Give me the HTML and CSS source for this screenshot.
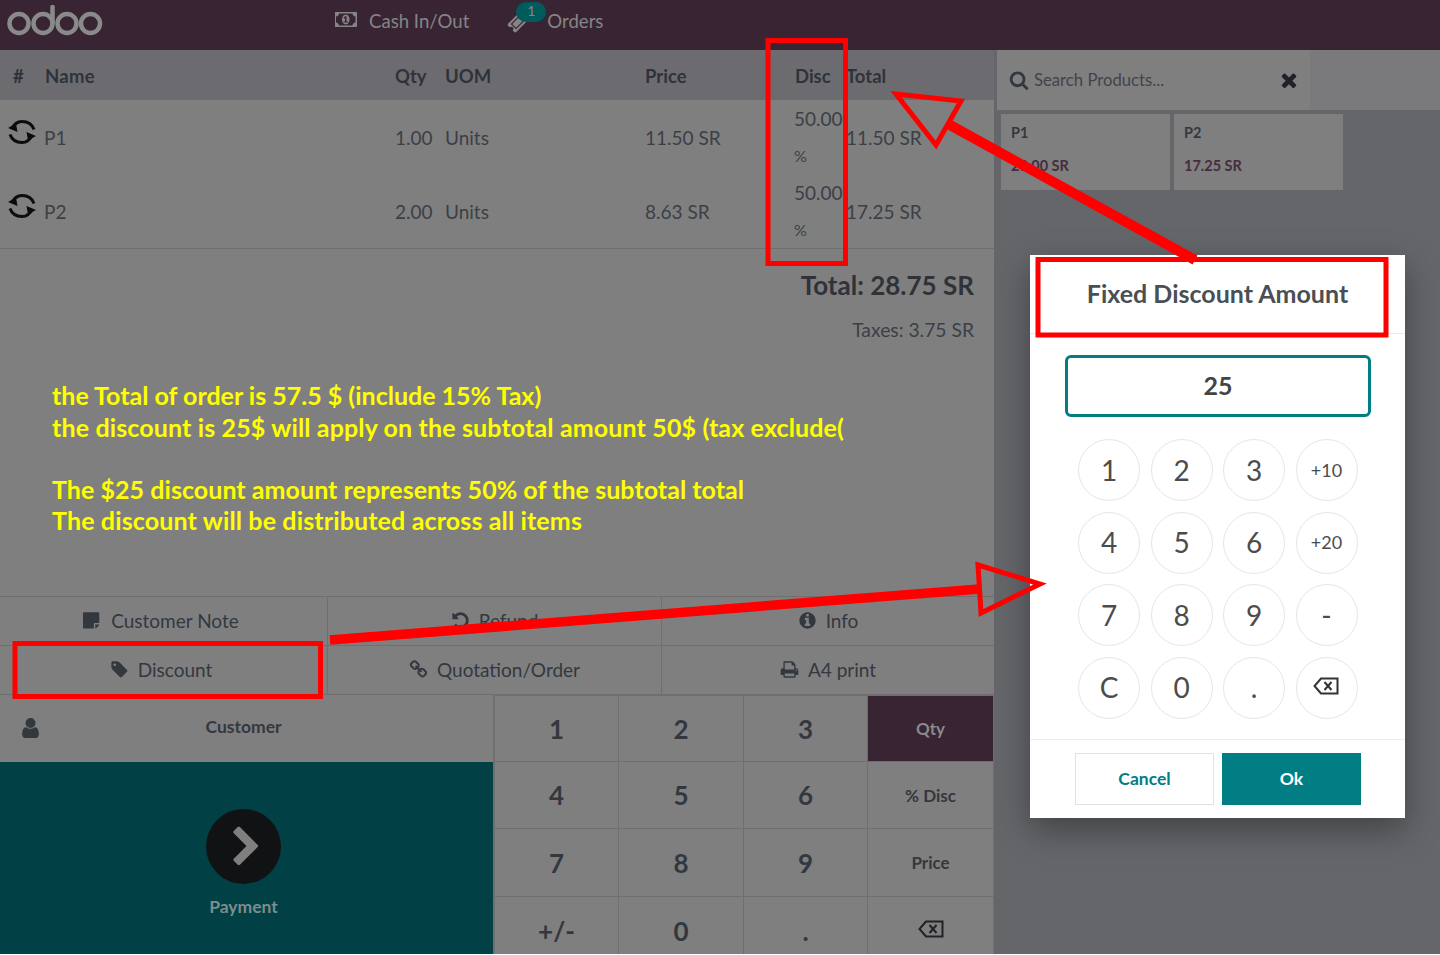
FILE: index.html
```html
<!DOCTYPE html>
<html lang="en">
<head>
    <meta charset="UTF-8">
    <meta name="viewport" content="width=device-width, initial-scale=1.0">
    <title>Point of Sale</title>
    <link rel="stylesheet" href="styles.css">
</head>
<body>
    <svg class="icon-defs" width="0" height="0">
        <symbol id="i-money" viewBox="0 0 1920 1792"><path d="M704 1152h384v-96h-128v-448h-114l-148 137 77 80q42-37 55-57h2v288h-128v96zm512-256q0 70-21 142t-59.500 134-101.500 101-138 39-138-39-101.500-101-59.500-134-21-142 21-142 59.500-134 101.500-101 138-39 138 39 101.500 101 59.500 134 21 142zm512 256v-512q-106 0-181-75t-75-181h-1152q0 106-75 181t-181 75v512q106 0 181 75t75 181h1152q0-106 75-181t181-75zm128-832v1152q0 26-19 45t-45 19h-1792q-26 0-45-19t-19-45v-1152q0-26 19-45t45-19h1792q26 0 45 19t19 45z"/></symbol>
        <symbol id="i-ticket" viewBox="0 0 1792 1792"><path d="M1024 452l316 316-572 572-316-316zm-211 979l618-618q19-19 19-45t-19-45l-362-362q-18-18-45-18t-45 18l-618 618q-19 19-19 45t19 45l362 362q18 18 45 18t45-18zm889-637l-907 908q-37 37-90.500 37t-90.500-37l-126-126q56-56 56-136t-56-136-136-56-136 56l-125-126q-37-37-37-90.500t37-90.500l907-906q37-37 90.500-37t90.500 37l125 125q-56 56-56 136t56 136 136 56 136-56l126 125q37 37 37 90.500t-37 90.500z"/></symbol>
        <symbol id="i-refresh" viewBox="0 0 28 24">
            <path d="M4 9C6 4 9.500 1.500 14 1.500C20 1.500 24 4 26 9.500M24 15C22 20 18.500 22.500 14 22.500C8 22.500 4 20 2 14.500" fill="none" stroke="currentColor" stroke-width="3"/>
            <path d="M0 8L8 3.500L9.500 12ZM28 16L20 20.500L18.500 12Z"/>
        </symbol>
        <symbol id="i-search" viewBox="0 0 1792 1792"><path d="M1216 832q0-185-131.500-316.500t-316.500-131.500-316.500 131.500-131.500 316.500 131.500 316.500 316.500 131.500 316.500-131.500 131.500-316.500zm512 832q0 52-38 90t-90 38q-54 0-90-38l-343-342q-179 124-399 124-143 0-273.500-55.500t-225-150-150-225-55.500-273.500 55.500-273.500 150-225 225-150 273.500-55.500 273.500 55.500 225 150 150 225 55.500 273.500q0 220-124 399l343 343q37 37 37 90z"/></symbol>
        <symbol id="i-times" viewBox="0 0 1792 1792"><path d="M1490 1322q0 40-28 68l-136 136q-28 28-68 28t-68-28l-294-294-294 294q-28 28-68 28t-68-28l-136-136q-28-28-28-68t28-68l294-294-294-294q-28-28-28-68t28-68l136-136q28-28 68-28t68 28l294 294 294-294q28-28 68-28t68 28l136 136q28 28 28 68t-28 68l-294 294 294 294q28 28 28 68z"/></symbol>
        <symbol id="i-note" viewBox="0 0 1792 1792"><path d="M1024 1232v416h-928q-40 0-68-28t-28-68v-1344q0-40 28-68t68-28h1344q40 0 68 28t28 68v928h-416q-40 0-68 28t-28 68zm128 32h381q-15 82-65 132l-184 184q-50 50-132 65v-381z"/></symbol>
        <symbol id="i-undo" viewBox="0 0 1792 1792"><path d="M1664 896q0 156-61 298t-164 245-245 164-298 61q-172 0-327-72.500t-264-204.500q-7-10-6.500-22.500t8.500-20.500l137-138q10-9 25-9 16 2 23 12 73 95 179 147t225 52q104 0 198.500-40.500t163.500-109.500 109.500-163.500 40.500-198.500-40.500-198.500-109.500-163.500-163.500-109.500-198.500-40.500q-98 0-188 35.500t-160 101.500l137 138q31 30 14 69-17 40-59 40h-448q-26 0-45-19t-19-45v-448q0-42 40-59 39-17 69 14l130 129q107-101 244.500-156.500t284.500-55.500q156 0 298 61t245 164 164 245 61 298z"/></symbol>
        <symbol id="i-info" viewBox="0 0 1792 1792"><path d="M1152 1376v-160q0-14-9-23t-23-9h-96v-512q0-14-9-23t-23-9h-320q-14 0-23 9t-9 23v160q0 14 9 23t23 9h96v320h-96q-14 0-23 9t-9 23v160q0 14 9 23t23 9h448q14 0 23-9t9-23zm-128-896v-160q0-14-9-23t-23-9h-192q-14 0-23 9t-9 23v160q0 14 9 23t23 9h192q14 0 23-9t9-23zm640 416q0 209-103 385.500t-279.500 279.500-385.500 103-385.500-103-279.500-279.500-103-385.500 103-385.500 279.500-279.500 385.500-103 385.500 103 279.500 279.500 103 385.500z"/></symbol>
        <symbol id="i-tag" viewBox="0 0 1792 1792"><path d="M576 448q0-53-37.500-90.500t-90.500-37.500-90.500 37.500-37.500 90.500 37.500 90.500 90.500 37.500 90.500-37.500 37.500-90.500zm1067 576q0 53-37 90l-491 492q-39 37-91 37-53 0-90-37l-715-716q-38-37-64.500-101t-26.500-117v-416q0-52 38-90t90-38h416q53 0 117 26.500t102 64.500l715 714q37 39 37 91z"/></symbol>
        <symbol id="i-link" viewBox="0 0 1792 1792"><path d="M1520 1216q0-40-28-68l-208-208q-28-28-68-28-42 0-72 32 3 3 19 18.500t21.500 21.500 15 19 13 25.500 3.500 27.500q0 40-28 68t-68 28q-15 0-27.500-3.500t-25.500-13-19-15-21.500-21.500-18.500-19q-33 31-33 73 0 40 28 68l206 207q27 27 68 27 40 0 68-26l147-146q28-28 28-67zm-703-705q0-40-28-68l-206-207q-28-28-68-28-39 0-68 27l-147 146q-28 28-28 67 0 40 28 68l208 208q27 27 68 27 42 0 72-31-3-3-19-18.500t-21.500-21.500-15-19-13-25.500-3.500-27.500q0-40 28-68t68-28q15 0 27.500 3.500t25.500 13 19 15 21.500 21.500 18.500 19q33-31 33-73zm895 705q0 120-85 203l-147 146q-83 83-203 83-121 0-204-85l-206-207q-83-83-83-203 0-123 88-209l-88-88q-86 88-208 88-120 0-204-84l-208-208q-84-84-84-204t85-203l147-146q83-83 203-83 121 0 204 85l206 207q83 83 83 203 0 123-88 209l88 88q86-88 208-88 120 0 204 84l208 208q84 84 84 204z"/></symbol>
        <symbol id="i-print" viewBox="0 0 1792 1792"><path d="M448 1536h896v-256h-896v256zm0-640h896v-384h-160q-40 0-68-28t-28-68v-160h-640v640zm1152 64q0-26-19-45t-45-19-45 19-19 45 19 45 45 19 45-19 19-45zm128 0v416q0 13-9.500 22.500t-22.500 9.500h-224v160q0 40-28 68t-68 28h-960q-40 0-68-28t-28-68v-160h-224q-13 0-22.500-9.500t-9.500-22.500v-416q0-79 56.500-135.500t135.500-56.500h64v-544q0-40 28-68t68-28h672q40 0 88 20t76 48l152 152q28 28 48 76t20 88v256h64q79 0 135.500 56.500t56.500 135.500z"/></symbol>
        <symbol id="i-user" viewBox="256 128 1280 1536"><path d="M1536 1399q0 109-62.500 187t-150.500 78h-854q-88 0-150.500-78t-62.500-187q0-85 8.500-160.500t31.500-152 58.500-131 94-89 134.500-34.500q131 128 313 128t313-128q76 0 134.500 34.500t94 89 58.500 131 31.500 152 8.500 160.500zm-256-887q0 159-112.500 271.500t-271.500 112.500-271.500-112.500-112.500-271.500 112.500-271.500 271.500-112.500 271.500 112.500 112.500 271.500z"/></symbol>
        <symbol id="i-chevron" viewBox="0 0 1792 1792"><path d="M1363 877l-742 742q-19 19-45 19t-45-19l-166-166q-19-19-19-45t19-45l531-531-531-531q-19-19-19-45t19-45l166-166q19-19 45-19t45 19l742 742q19 19 19 45t-19 45z"/></symbol>
        <symbol id="i-backspace" viewBox="0 0 26 18"><path d="M8 1.500h16.500v15H8L1.500 9z" fill="none" stroke="currentColor" stroke-width="2"/><path d="M11.500 5l7 8m0-8l-7 8" fill="none" stroke="currentColor" stroke-width="2"/></symbol>
    </svg>

    <div class="app">
        <header class="topbar">
            <svg class="logo" width="96" height="32" viewBox="0 0 96 32" stroke="currentColor" stroke-width="4.500" stroke-linecap="round">
                <circle cx="12" cy="18.500" r="9.500"/>
                <circle cx="36" cy="18.500" r="9.500"/>
                <path d="M45.500 18V2"/>
                <circle cx="60" cy="18.500" r="9.500"/>
                <circle cx="83.500" cy="18.500" r="9.500"/>
            </svg>
            <nav class="topnav">
                <span class="topnav-item cash">
                    <svg class="icon-money"><use href="#i-money"/></svg>
                    Cash In/Out
                </span>
                <span class="topnav-item orders">
                    <svg class="icon-ticket"><use href="#i-ticket"/></svg>
                    <span class="badge">1</span>
                    Orders
                </span>
            </nav>
        </header>

        <div class="workspace">
            <section class="left-pane">
                <div class="order">
                    <div class="line line-head">
                        <span class="hash">#</span>
                        <span class="head-name">Name</span>
                        <span>Qty</span>
                        <span>UOM</span>
                        <span>Price</span>
                        <span>Disc</span>
                        <span>Total</span>
                    </div>
                    <div class="line">
                        <svg class="icon-refresh"><use href="#i-refresh"/></svg>
                        <span>P1</span>
                        <span>1.00</span>
                        <span>Units</span>
                        <span>11.50 SR</span>
                        <div class="disc">50.00<span class="pct">%</span></div>
                        <span>11.50 SR</span>
                    </div>
                    <div class="line">
                        <svg class="icon-refresh"><use href="#i-refresh"/></svg>
                        <span>P2</span>
                        <span>2.00</span>
                        <span>Units</span>
                        <span>8.63 SR</span>
                        <div class="disc">50.00<span class="pct">%</span></div>
                        <span>17.25 SR</span>
                    </div>
                    <div class="summary">
                        <div class="summary-total">Total: 28.75 SR</div>
                        <div class="summary-taxes">Taxes: 3.75 SR</div>
                    </div>
                </div>

                <div class="control-buttons">
                    <div class="control"><svg><use href="#i-note"/></svg>Customer Note</div>
                    <div class="control"><svg><use href="#i-undo"/></svg>Refund</div>
                    <div class="control"><svg><use href="#i-info"/></svg>Info</div>
                    <div class="control"><svg><use href="#i-tag"/></svg>Discount</div>
                    <div class="control"><svg><use href="#i-link"/></svg>Quotation/Order</div>
                    <div class="control"><svg><use href="#i-print"/></svg>A4 print</div>
                </div>

                <div class="pads">
                    <div class="actions">
                        <div class="customer">
                            <svg class="icon-user"><use href="#i-user"/></svg>
                            <span>Customer</span>
                        </div>
                        <div class="payment">
                            <div class="payment-circle"><svg><use href="#i-chevron"/></svg></div>
                            <span>Payment</span>
                        </div>
                    </div>
                    <div class="numpad">
                        <div class="key">1</div><div class="key">2</div><div class="key">3</div><div class="key mode active">Qty</div>
                        <div class="key">4</div><div class="key">5</div><div class="key">6</div><div class="key mode">% Disc</div>
                        <div class="key">7</div><div class="key">8</div><div class="key">9</div><div class="key mode">Price</div>
                        <div class="key">+/-</div><div class="key">0</div><div class="key">.</div><div class="key mode"><svg class="icon-back"><use href="#i-backspace"/></svg></div>
                    </div>
                </div>
            </section>

            <section class="right-pane">
                <div class="search-row">
                    <div class="search">
                        <svg class="icon-search"><use href="#i-search"/></svg>
                        <span class="search-text">Search Products...</span>
                        <svg class="icon-times"><use href="#i-times"/></svg>
                    </div>
                </div>
                <div class="products">
                    <div class="product"><span class="product-name">P1</span><span class="product-price">23.00 SR</span></div>
                    <div class="product"><span class="product-name">P2</span><span class="product-price">17.25 SR</span></div>
                </div>
            </section>
        </div>
    </div>

    <div class="modal">
        <div class="modal-title">Fixed Discount Amount</div>
        <div class="modal-body">
            <div class="modal-input">25</div>
            <div class="circle-pad">
                <div class="circle">1</div><div class="circle">2</div><div class="circle">3</div><div class="circle small">+10</div>
                <div class="circle">4</div><div class="circle">5</div><div class="circle">6</div><div class="circle small">+20</div>
                <div class="circle">7</div><div class="circle">8</div><div class="circle">9</div><div class="circle">-</div>
                <div class="circle">C</div><div class="circle">0</div><div class="circle">.</div><div class="circle"><svg class="icon-back"><use href="#i-backspace"/></svg></div>
            </div>
        </div>
        <div class="modal-footer">
            <div class="btn btn-cancel">Cancel</div>
            <div class="btn btn-ok">Ok</div>
        </div>
    </div>

    <div class="note">
        <div>the Total of order is 57.5 $ (include 15% Tax)</div>
        <div class="wide">the discount is 25$ will apply on the subtotal amount 50$ (tax exclude(</div>
        <div class="gap">The $25 discount amount represents 50% of the subtotal total</div>
        <div class="wide last">The discount will be distributed across all items</div>
    </div>

    <!-- red marks drawn over the screenshot -->
    <svg class="marks" width="1440" height="955" viewBox="0 0 1440 955">
        <rect x="768" y="40.500" width="77.500" height="223"/>
        <rect x="1038" y="259.500" width="348" height="75.500"/>
        <rect x="15" y="643.500" width="305.500" height="53"/>
        <polygon points="896,94 961,101 936,145"/>
        <path class="shaft" d="M950 125L1195 260"/>
        <polygon points="978,565 1040,584 981,613"/>
        <path class="shaft thin" d="M330 640L980 589"/>
    </svg>
</body>
</html>
```

FILE: styles.css
```css
* {
    box-sizing: border-box;
}
html, body {
    margin: 0;
    height: 955px;
    overflow: hidden;
    background: #fff;
}
body {
    font-family: Lato, "Noto Sans", sans-serif;
    color: #33383f;
    position: relative;
}
.icon-defs {
    position: absolute;
}
svg {
    fill: currentColor;
}

.app {
    height: 954px;
    display: flex;
    flex-direction: column;
    overflow: hidden;
    background: #65666a;
}

/* top bar */
.topbar {
    height: 50px;
    flex: none;
    display: flex;
    align-items: center;
    background: #392433;
    color: #858585;
    padding-left: 7px;
}
.logo {
    color: #8a8a8a;
    fill: none;
    flex: none;
    margin-bottom: 9px;
}
.topnav {
    display: flex;
    margin: 0 0 8px 232px;
    font-size: 18.600px;
}
.topnav-item {
    display: flex;
    align-items: center;
    position: relative;
}
.icon-money {
    width: 23px;
    height: 21px;
    margin-right: 11px;
    margin-top: -3px;
}
.orders {
    margin-left: 38px;
    padding-left: 40px;
}
.icon-ticket {
    position: absolute;
    left: 0;
    top: 2px;
    width: 21px;
    height: 21px;
}
.badge {
    position: absolute;
    left: 9px;
    top: -8px;
    width: 30px;
    height: 20px;
    border-radius: 10px;
    background: #005b5c;
    font-size: 14px;
    line-height: 18px;
    text-align: center;
}

.workspace {
    flex: 1;
    min-height: 0;
    display: flex;
}

/* left side */
.left-pane {
    width: 994px;
    flex: none;
    display: flex;
    flex-direction: column;
    background: #7f7f7f;
}
.order {
    flex: 1;
    min-height: 0;
}
.line {
    height: 74px;
    display: grid;
    grid-template-columns: 44px 351px 50px 200px 150px 51px 1fr;
    align-items: center;
    font-size: 19px;
    color: #3b4047;
}
.line-head {
    height: 50px;
    padding-top: 1px;
    background: #6c6c70;
    color: #2f3339;
    font-weight: 700;
    font-size: 18.500px;
}
.hash {
    padding-left: 13px;
}
.head-name {
    padding-left: 1px;
    letter-spacing: 0.300px;
}
.icon-refresh {
    width: 28px;
    height: 24px;
    margin: 0 0 10px 8px;
    color: #0c0c0c;
}
.disc {
    line-height: 37px;
    width: 50px;
    margin-left: -1px;
}
.pct {
    display: block;
    font-size: 16px;
}
.summary {
    border-top: 1px solid #6f6f6f;
    padding: 20px 20px 0 0;
    text-align: right;
}
.summary-total {
    font-size: 26px;
    font-weight: 700;
    line-height: 32px;
    color: #2f3339;
}
.summary-taxes {
    font-size: 19.300px;
    line-height: 24px;
    margin-top: 17px;
    color: #3b4047;
}

.control-buttons {
    flex: none;
    height: 98px;
    display: grid;
    grid-template-columns: 327px 334px 1fr;
    grid-template-rows: 49px 49px;
    border-top: 1px solid #6f6f6f;
}
.control {
    display: flex;
    align-items: center;
    justify-content: center;
    gap: 9px;
    padding-bottom: 2px;
    font-size: 19px;
    color: #33383f;
    border-left: 1px solid #6f6f6f;
    border-bottom: 1px solid #6f6f6f;
}
.control:nth-child(3n+1) {
    border-left: 0;
    padding-right: 5px;
}
.control svg {
    width: 19px;
    height: 19px;
    flex: none;
}

.pads {
    flex: none;
    height: 260px;
    display: flex;
}
.actions {
    width: 493px;
    flex: none;
    display: flex;
    flex-direction: column;
}
.customer {
    height: 68px;
    flex: none;
    position: relative;
    display: flex;
    align-items: center;
    justify-content: center;
    font-size: 17.500px;
    font-weight: 700;
    color: #33383f;
    padding: 0 6px 4px 0;
}
.icon-user {
    position: absolute;
    left: 22px;
    top: 24px;
    width: 17px;
    height: 20px;
}
.payment {
    flex: 1;
    background: #014044;
    color: #7b8d8d;
    font-size: 17.500px;
    font-weight: 700;
    display: flex;
    flex-direction: column;
    align-items: center;
    padding: 47px 6px 0 0;
    gap: 12px;
}
.payment-circle {
    width: 75px;
    height: 75px;
    border-radius: 50%;
    background: #111214;
    color: #7f7f7f;
    display: flex;
    align-items: center;
    justify-content: center;
}
.payment-circle svg {
    width: 43px;
    height: 43px;
    margin: 1px 0 0 5px;
}
.numpad {
    flex: none;
    width: 501px;
    display: grid;
    grid-template-columns: 124px 125px 124px 126px;
    grid-template-rows: 66px 67px 68px 68px;
    border-top: 2px solid #6f6f6f;
    border-left: 2px solid #6f6f6f;
}
.key {
    display: flex;
    align-items: center;
    justify-content: center;
    font-size: 26px;
    font-weight: 700;
    color: #33383f;
    border-right: 1px solid #6f6f6f;
    border-bottom: 1px solid #6f6f6f;
}
.key.mode {
    font-size: 17px;
}
.key.active {
    background: #392433;
    color: #8a8a8a;
}
.key .icon-back {
    width: 26px;
    height: 18px;
    margin-bottom: 3px;
    color: #1f2226;
}

/* right side */
.right-pane {
    flex: 1;
    min-width: 0;
}
.search-row {
    height: 60px;
    margin-left: 3px;
    background: #7a7a7c;
}
.search {
    width: 313px;
    height: 100%;
    background: #7f7f7f;
    display: flex;
    align-items: center;
    padding: 0 12px;
    color: #33383f;
}
.icon-search {
    width: 20px;
    height: 20px;
    margin-right: 5px;
    flex: none;
}
.search-text {
    flex: 1;
    font-size: 16.700px;
    color: #3f444a;
}
.icon-times {
    width: 22px;
    height: 22px;
    margin-right: -2px;
    color: #1f2226;
}
.products {
    display: flex;
    gap: 4px;
    padding: 4px 0 0 7px;
}
.product {
    width: 169px;
    height: 76px;
    background: #7f7f7f;
    padding: 10px 10px;
    display: flex;
    flex-direction: column;
    gap: 16px;
    font-size: 14.500px;
    font-weight: 700;
}
.product-price {
    color: #472c40;
}

/* dialog */
.modal {
    position: absolute;
    left: 1030px;
    top: 255px;
    width: 375px;
    height: 563px;
    background: #fff;
    color: #4c4c4c;
    box-shadow: 0 12px 32px rgba(0, 0, 0, 0.35);
    display: flex;
    flex-direction: column;
}
.modal-title {
    height: 79px;
    flex: none;
    border-bottom: 1px solid #e9e9e9;
    text-align: center;
    font-size: 25px;
    font-weight: 700;
    line-height: 76px;
    color: #4a4f55;
}
.modal-body {
    flex: 1;
    padding: 21px 34px 0 35px;
    display: flex;
    flex-direction: column;
}
.modal-input {
    height: 62px;
    border: 3px solid #017e84;
    border-radius: 6px;
    text-align: center;
    font-size: 25px;
    font-weight: 700;
    line-height: 54px;
    color: #444;
}
.circle-pad {
    margin: 22px 0 0 13px;
    display: grid;
    grid-template-columns: repeat(4, 62px);
    grid-auto-rows: 62px;
    gap: 10.500px;
}
.circle {
    border: 1px solid #e6e6e6;
    border-radius: 50%;
    display: flex;
    align-items: center;
    justify-content: center;
    padding-bottom: 1px;
    font-size: 28px;
    color: #4c4c4c;
}
.circle.small {
    font-size: 18px;
}
.circle .icon-back {
    width: 26px;
    height: 18px;
    margin: 0 2px 2px 0;
    color: #333;
}
.modal-footer {
    height: 79px;
    flex: none;
    border-top: 1px solid #eee;
    display: flex;
    gap: 8px;
    padding: 13px 44px 0 45px;
}
.btn {
    width: 139px;
    height: 52px;
    display: flex;
    align-items: center;
    justify-content: center;
    padding-bottom: 1px;
    font-size: 17.500px;
    font-weight: 700;
}
.btn-cancel {
    border: 1px solid #e2e2e2;
    color: #017e84;
}
.btn-ok {
    background: #017e84;
    color: #fff;
}

/* annotations */
.note {
    position: absolute;
    left: 52px;
    top: 379px;
    color: #ffff00;
    font-size: 25px;
    font-weight: 700;
    line-height: 32px;
}
.note .wide {
    letter-spacing: 0.140px;
}
.note .gap {
    margin-top: 30px;
    letter-spacing: 0.050px;
}
.note .last {
    margin-top: -1px;
}
.marks {
    position: absolute;
    left: 0;
    top: 0;
    fill: none;
    stroke: #ff0000;
    stroke-width: 5;
}
.shaft {
    stroke-width: 10;
}
.shaft.thin {
    stroke-width: 9.500;
}
```
